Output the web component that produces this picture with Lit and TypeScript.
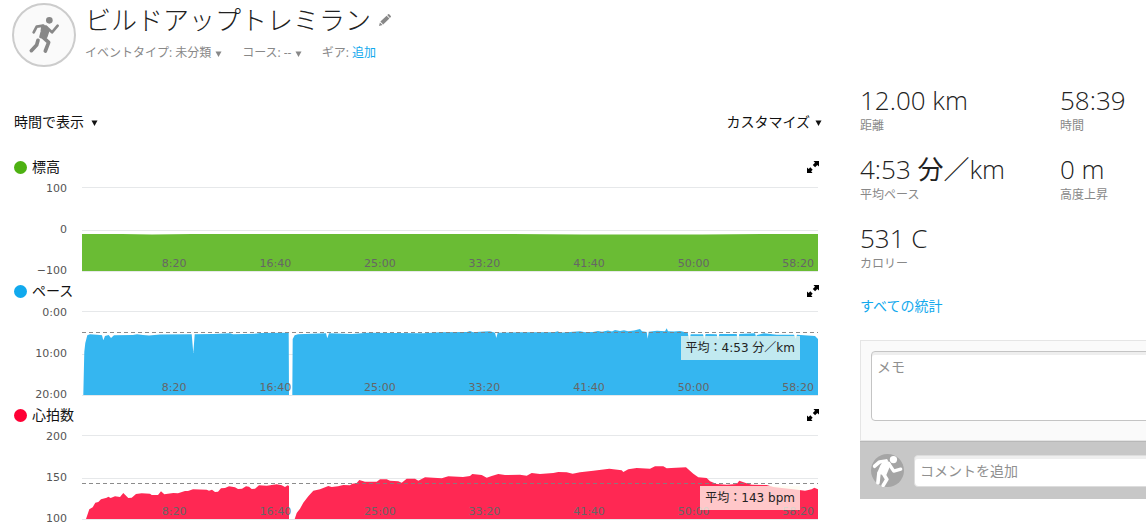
import { LitElement, html, svg, css } from "lit";
import { customElement, property } from "lit/decorators.js";

type Point = [number, number];

interface Series {
  id: string;
  title: string;
  color: string;
  fill: string;
  ticks: string[];
  runs: Point[][];
  average?: number;
  note?: string;
  tone?: string;
}

const PLOT_WIDTH = 736;
const PLOT_HEIGHT = 84;
const TIMES = ["8:20", "16:40", "25:00", "33:20", "41:40", "50:00", "58:20"];

const ELEVATION: Point[][] = [
  [[0, 47], [40, 47], [70, 47.4], [110, 47], [180, 47], [230, 47], [300, 47], [380, 47], [430, 47], [500, 47.5], [560, 47.5], [620, 47.5], [680, 47], [736, 47]],
];

const PACE: Point[][] = [
  [
    [1.3, 84], [2.3, 40.7], [3.3, 32], [5.3, 24.3], [8, 23.3], [18, 24], [20, 24.3], [21.3, 29.3], [23, 25], [26.7, 24],
    [29, 27], [32, 24.3], [51, 24], [55, 23.3], [61, 24], [67, 24.6], [78, 23.6], [109.7, 23.3], [111.3, 42], [112.7, 23.3],
    [131, 23], [148, 22.3], [151, 23.3], [175, 22.6], [178, 22], [206.7, 21.7], [207, 84],
  ],
  [
    [210.3, 84], [210.7, 28], [212.7, 24.3], [216, 23.3], [244, 22.3], [245.3, 27.3], [247, 22.3], [269.7, 23], [286, 21.7],
    [341, 22.3], [358, 21.3], [385, 21], [388, 20], [391, 21.3], [402, 20.4], [408, 20.3], [413, 21.7], [414.3, 27], [415.7, 21.7], [441, 21.3],
    [472, 21.3], [476, 20.3], [478, 21.7], [488, 21], [498, 20.3], [503, 21.2], [511, 21], [516, 20], [520, 20.8], [526, 19.6], [530, 20.4], [533, 19], [538, 20],
    [542, 19.3], [546, 20.2], [552, 19.6], [558, 18], [560, 20.3], [564.7, 21], [565.7, 27.7], [566.7, 20.7], [575, 19.8], [583, 20.3], [584.7, 17.3],
    [586, 20.3], [592, 20.6], [598, 20], [605.7, 21.7], [607.3, 29.7], [608.7, 23.3],
    [621, 23.3], [622.3, 28.3], [623.7, 23], [634.7, 23.3], [636, 29], [637.3, 23], [654.7, 23], [656, 31.7], [657.3, 23],
    [673, 22.3], [674, 25.7], [675, 24], [682, 22.3], [694.7, 23.7], [712, 23.7], [713.7, 27.7], [715, 23.7], [733, 25], [736, 28], [736, 84],
  ],
];

const HEART: Point[][] = [
  [
    [4, 84], [7.3, 74.3], [10.7, 72.3], [13.3, 67.7], [16.3, 67], [19, 64.3], [24.7, 62.7], [26.3, 61.7], [28.7, 63], [33, 61.3],
    [38, 62], [41.3, 58], [46.3, 63], [49.7, 62.7], [54, 59], [59.7, 58.3], [68, 58.7], [69.7, 60], [76, 60], [79, 56.3],
    [82.3, 59.3], [91.3, 58], [96, 58.3], [103, 56], [106, 56], [111, 54.3], [124.7, 54.7], [127, 55.7], [130, 54.7], [133, 57],
    [136, 56.7], [139, 53.3], [143, 53], [147, 51.3], [153, 52.3], [156, 54], [160, 53.7], [164, 51.3], [167, 51.7], [169.7, 54],
    [173, 53.7], [177, 50.3], [184.7, 50.7], [194.7, 49.3], [199.7, 50.3], [203, 52], [205.7, 50.3], [207, 51], [207, 84],
  ],
  [
    [212.7, 84], [214.7, 78], [218, 73.7], [221.3, 67.7], [226.3, 61.3], [231.3, 55.7], [238, 54.3], [246.3, 51], [249.7, 52],
    [256, 51.3], [261.3, 50], [268, 50.3], [270.3, 48.7], [274.7, 48], [277.3, 45], [283, 46.7], [294.7, 46.7], [298, 44.3],
    [304.7, 44.3], [308, 45.7], [316.3, 46.3], [319.7, 47.7], [324.7, 43.7], [333, 43.7], [336.3, 45.7], [343, 42.3], [359.7, 43.3],
    [366.3, 41.3], [381, 42], [388, 41], [390.3, 39], [399.7, 40], [404.7, 42.7], [409.7, 41], [416.3, 39], [423, 40], [438, 39.7],
    [444.7, 40.7], [449.7, 38], [458, 39], [471.3, 38], [476.3, 37], [484.7, 37.3], [490.7, 38.7], [498, 37.3], [511.3, 35.7],
    [527.3, 33.7], [539.7, 35.3], [541.3, 37], [546.3, 34.3], [554.7, 33], [568, 33.7], [573, 31.3], [581.3, 31.3], [584.7, 33.3],
    [594, 32.7], [604, 32.3], [611.3, 38.7], [616.3, 42.3], [624.7, 43], [628, 46.3], [634.7, 49], [644.7, 49.7], [654.7, 49],
    [657.3, 45.7], [663, 47.7], [669.7, 49.7], [684.7, 50], [691.3, 52], [699.7, 53], [711.3, 54.3], [723, 55.7], [729.7, 54.3],
    [732.3, 52.7], [736, 54.3], [736, 84],
  ],
];

const SERIES: Series[] = [
  { id: "elevation", title: "標高", color: "#4db112", fill: "#6abc34", ticks: ["100", "0", "−100"], runs: ELEVATION },
  { id: "pace", title: "ペース", color: "#11a9ed", fill: "#35b6f0", ticks: ["0:00", "10:00", "20:00"], runs: PACE, average: 21.5, note: "平均：4:53 分／km", tone: "cool" },
  { id: "heart", title: "心拍数", color: "#ff0035", fill: "#ff2853", ticks: ["200", "150", "100"], runs: HEART, average: 48.5, note: "平均：143 bpm", tone: "warm" },
];

const STATS = [
  { value: "12.00 km", label: "距離" },
  { value: "58:39", label: "時間" },
  { value: html`4:53 <span class="unit">分／</span>km`, label: "平均ペース" },
  { value: "0 m", label: "高度上昇" },
  { value: "531 C", label: "カロリー" },
];

const FONT = css`"Open Sans", "Noto Sans CJK JP", sans-serif`;

const caret = html`<svg class="caret" viewBox="0 0 7 6" aria-hidden="true"><path d="M.5 .5h6L3.5 6z" /></svg>`;

@customElement("activity-chart")
export class ActivityChart extends LitElement {
  @property({ attribute: false }) series!: Series;

  static styles = css`
    :host { display: block; padding-bottom: 8px; }
    .head { display: flex; align-items: center; gap: 5px; height: 24px; margin-bottom: 8px; }
    .dot { width: 13px; height: 13px; }
    .title { margin: 0; flex: 1; font: 400 14px/20px ${FONT}; color: #111; }
    .expand { display: block; padding: 0; border: 0; background: none; width: 12px; height: 12px; margin-right: -1px; }
    .expand svg { display: block; width: 12px; height: 12px; }
    .body { display: grid; grid-template-columns: 53px minmax(0, 1fr); column-gap: 15px; height: 84px; }
    .ticks { display: flex; flex-direction: column; justify-content: space-between; margin: -6px 0 -8px; text-align: right; font: 11px/16px "DejaVu Sans", sans-serif; color: #555; }
    .plot { position: relative; }
    .graph { display: block; width: 100%; height: 84px; overflow: visible; }
    .times { position: absolute; left: 0; right: 4px; bottom: -1px; display: grid; grid-template-columns: repeat(7, minmax(0, 1fr)); text-align: right; font: 11px/16px "DejaVu Sans", sans-serif; color: #666; }
    .note { position: absolute; right: 18px; padding: 0 5px; font: 12px/24px "DejaVu Sans", "Noto Sans CJK JP", sans-serif; color: #222; white-space: nowrap; }
    .cool { top: 25px; background: rgba(240, 250, 240, 0.75); }
    .warm { top: 51px; background: rgba(255, 252, 240, 0.75); }
  `;

  private area(run: Point[]) {
    const first = run[0][0];
    const last = run[run.length - 1][0];
    return `M${first} ${PLOT_HEIGHT}L${run.map((p) => p.join(" ")).join("L")}L${last} ${PLOT_HEIGHT}Z`;
  }

  render() {
    const s = this.series;
    return html`
      <div class="head">
        <svg class="dot" viewBox="0 0 13 13" aria-hidden="true"><circle cx="6.5" cy="6.5" r="6.5" fill=${s.color} /></svg>
        <h2 class="title">${s.title}</h2>
        <button class="expand" aria-label="${s.title}を拡大">
          <svg viewBox="0 0 12 12"><path d="M6.5 0H12v5.5l-1.7-1.4-2.2 2.1-2.3-2.2 2.2-2.2zM5.5 12H0V6.5l1.7 1.4 1.6-1.6 2.4 2.4-1.6 1.6z" /></svg>
        </button>
      </div>
      <div class="body">
        <div class="ticks">${s.ticks.map((t) => html`<span>${t}</span>`)}</div>
        <div class="plot">
          <svg class="graph" viewBox="0 0 ${PLOT_WIDTH} ${PLOT_HEIGHT}" preserveAspectRatio="none" role="img" aria-label=${s.title}>
            ${[0.5, 43.5, 84.5].map((y) => svg`<path d="M0 ${y}H${PLOT_WIDTH}" stroke="#e6e8ea" vector-effect="non-scaling-stroke" />`)}
            ${s.runs.map((r) => svg`<path d=${this.area(r)} fill=${s.fill} />`)}
            ${s.average ? svg`<path d="M0 ${s.average}H${PLOT_WIDTH}" stroke="#808080" stroke-opacity=".9" stroke-dasharray="4 3" vector-effect="non-scaling-stroke" />` : ""}
          </svg>
          <div class="times">${TIMES.map((t) => html`<span>${t}</span>`)}</div>
          ${s.note ? html`<div class="note ${s.tone}">${s.note}</div>` : ""}
        </div>
      </div>
    `;
  }
}

@customElement("app-root")
export class AppRoot extends LitElement {
  static styles = css`
    :host { display: block; overflow: hidden; background: #fff; color: #222; font-family: ${FONT}; }
    button, select, input, textarea { font-family: inherit; box-sizing: border-box; }
    button, select { appearance: none; padding: 0; border: 0; background: none; color: inherit; }
    a { color: #11a9ed; text-decoration: none; }
    .header { display: flex; gap: 9px; padding: 3px 12px 0; }
    .badge { display: block; width: 64px; height: 64px; flex: none; }
    .headline { display: flex; align-items: center; gap: 8px; height: 34px; }
    .name { margin: 0; font-size: 26px; line-height: 34px; font-weight: 300; }
    .edit, .edit svg { display: block; width: 12px; height: 12px; }
    .meta { display: flex; gap: 20px; height: 32px; align-items: center; font-size: 12px; line-height: 20px; color: #888; }
    .field { display: flex; align-items: center; gap: 3px; }
    .drop { display: inline-grid; align-items: center; }
    .drop > * { grid-area: 1 / 1; }
    .drop select { font-size: inherit; line-height: 20px; font-weight: inherit; padding-right: 10px; }
    .drop .caret { justify-self: end; pointer-events: none; }
    .caret { display: block; width: 7px; height: 6px; margin-top: 2px; fill: currentColor; }
    .main { display: grid; grid-template-columns: minmax(0, 1fr) 286px; column-gap: 38px; padding-left: 14px; }
    .tools { display: flex; justify-content: space-between; align-items: center; height: 40px; margin: 33px 0 13px; font-size: 14px; color: #111; }
    .tools .drop select { padding-right: 14px; }
    .customize { display: flex; align-items: center; gap: 5px; font-size: 14px; line-height: 20px; }
    .charts { padding-right: 4px; }
    .stats { display: grid; grid-template-columns: 200px minmax(0, 1fr); row-gap: 18px; margin: 14px 0 24px; }
    .stat { display: flex; flex-direction: column-reverse; white-space: nowrap; }
    .value { margin: 0; font-size: 26px; line-height: 35px; font-weight: 300; }
    .unit { font-weight: 400; }
    .label { font-size: 12px; line-height: 16px; color: #888; }
    .all { display: block; font-size: 14px; line-height: 20px; }
    .panel { margin: 24px -20px 0 0; border: 1px solid #e5e5e5; background: #fafafa; }
    .notes { padding: 10px 10px 19px; border-bottom: 1px solid #e5e5e5; }
    .memo, .comment { display: block; width: 100%; background: #fff; border-radius: 4px; font-size: 14px; box-shadow: inset 0 3px 0 #eee; color: #222; }
    .memo { height: 70px; padding: 5px; line-height: 20px; border: 1px solid #c4c4c4; resize: none; }
    .comment { height: 32px; padding: 0 5px; border: 1px solid #ddd; }
    .memo::placeholder, .comment::placeholder { color: #909090; opacity: 1; }
    .reply { display: flex; align-items: center; gap: 10px; height: 58px; box-sizing: border-box; margin: 0 -1px -1px; padding: 0 11px; background: #c7c7c7; border-top: 1px solid #b8b8b8; }
    .avatar { display: block; width: 33px; height: 33px; flex: none; }
  `;

  render() {
    return html`
      <header class="header">
        <svg class="badge" viewBox="0 0 192 192" aria-hidden="true">
          <circle cx="96" cy="96" r="93" fill="#fafafa" stroke="#ccc" stroke-width="6" />
          <g transform="translate(-36 -9)" fill="none" stroke="#888" stroke-linecap="round" stroke-linejoin="round">
            <circle cx="148" cy="61" r="10" fill="#888" stroke="none" />
            <path d="M127 78l12 3 6 12-6 18-18 0 4-16z" fill="#888" stroke-width="7" />
            <path d="M130 77l-20 3-9 17" stroke-width="8" />
            <path d="M138 80l18 17 17-20" stroke-width="8" />
            <path d="M126 109l20 18-10 26" stroke-width="11" />
            <path d="M114 121l-4 14-16 17" stroke-width="11" />
          </g>
        </svg>
        <div>
          <div class="headline">
            <h1 class="name">ビルドアップトレミラン</h1>
            <button class="edit" aria-label="名前を編集">
              <svg viewBox="0 0 12 12" fill="#888"><path d="M0 12l.9-3.6 2.7 2.7zM1.4 7.6l6.2-5.9 2.8 2.9-6.2 5.9zM8.2 1.1L9.2.2q.5-.4 1 0l1.6 1.7q.4.5 0 1l-.9 1z" /></svg>
            </button>
          </div>
          <div class="meta">
            <div class="field">
              <label for="event">イベントタイプ:</label>
              <span class="drop"><select id="event"><option>未分類</option></select>${caret}</span>
            </div>
            <div class="field">
              <label for="course">コース:</label>
              <span class="drop"><select id="course"><option>--</option></select>${caret}</span>
            </div>
            <div class="field"><span>ギア:</span><a href="#gear">追加</a></div>
          </div>
        </div>
      </header>
      <main class="main">
        <section>
          <div class="tools">
            <span class="drop"><select aria-label="表示単位"><option>時間で表示</option></select>${caret}</span>
            <button class="customize">カスタマイズ${caret}</button>
          </div>
          <div class="charts">${SERIES.map((s) => html`<activity-chart .series=${s}></activity-chart>`)}</div>
        </section>
        <aside>
          <dl class="stats">
            ${STATS.map((s) => html`<div class="stat"><dt class="label">${s.label}</dt><dd class="value">${s.value}</dd></div>`)}
          </dl>
          <a class="all" href="#stats">すべての統計</a>
          <div class="panel">
            <div class="notes"><textarea class="memo" aria-label="メモ" placeholder="メモ"></textarea></div>
            <div class="reply">
              <svg class="avatar" viewBox="0 0 100 100" aria-hidden="true">
                <circle cx="50" cy="50" r="50" fill="#a5a5a5" />
                <g fill="none" stroke="#fff" stroke-linecap="round" stroke-linejoin="round">
                  <circle cx="68" cy="17" r="11" fill="#fff" stroke="none" />
                  <path d="M42 24l13 6-6 16-6 14-19-4 8-19z" fill="#fff" stroke-width="9" />
                  <path d="M46 21l-20 3-15 13" stroke-width="11" />
                  <path d="M53 28l16 24 21-6" stroke-width="10" />
                  <path d="M38 60l10 17-11 18" stroke-width="11" />
                  <path d="M24 58l-3 29" stroke-width="11" />
                </g>
              </svg>
              <input class="comment" type="text" aria-label="コメントを追加" placeholder="コメントを追加" />
            </div>
          </div>
        </aside>
      </main>
    `;
  }
}
